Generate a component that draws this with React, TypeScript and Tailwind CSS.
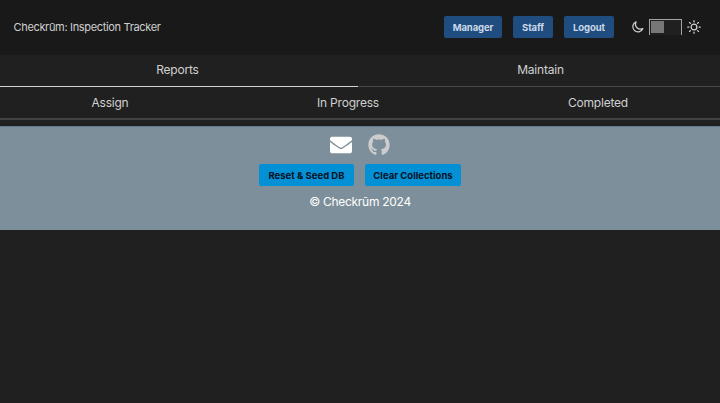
import type { ReactNode } from "react";
import { FaEnvelope, FaGithub } from "react-icons/fa";

function NavButton({ width, children }: { width: string; children: ReactNode }) {
  return (
    <button className={`${width} h-[22px] rounded-[2px] bg-[#1f4d80] pt-px text-[9.5px] leading-[20px] font-bold tracking-[-0.1px] whitespace-nowrap text-[#cbd8e8]`}>
      {children}
    </button>
  );
}

function SeedButton({ width, children }: { width: string; children: ReactNode }) {
  return (
    <button className={`${width} h-[22px] rounded-[2px] bg-[#0390d5] pt-px text-[9.5px] leading-[21px] font-bold whitespace-nowrap text-[#071225]`}>
      {children}
    </button>
  );
}

function MoonIcon() {
  return (
    <svg width="13" height="14" viewBox="0 0 13 14" fill="none" stroke="currentColor" strokeWidth="1.25" strokeLinejoin="round">
      <path d="M5 1.9A5.2 5.2 0 1 0 11.8 8.7C9.8 9.5 7.5 9.2 6 7.7 4.5 6.2 4.2 3.9 5 1.9Z" />
    </svg>
  );
}

function SunIcon() {
  return (
    <svg width="14" height="14" viewBox="0 0 14 14" fill="none" stroke="currentColor" strokeWidth="1.25" strokeLinecap="round">
      <circle cx="7" cy="7" r="2.9" />
      <path d="M7 .7v1.2M7 12.1v1.2M.7 7h1.2M12.1 7h1.2M2.55 2.55l.85.85M10.6 10.6l.85.85M2.55 11.45l.85-.85M10.6 3.4l.85-.85" />
    </svg>
  );
}

export default function App() {
  return (
    <div className="flex h-[403px] w-[720px] flex-col overflow-hidden bg-[#202020] font-['Inter',sans-serif] text-[#d0d0d0]">
      <header className="flex h-[55px] shrink-0 items-center justify-between bg-[#191919] pr-[19px] pb-px pl-[13.5px]">
        <h1 className="text-[11px] leading-4 tracking-[-0.33px]">Checkrūm: Inspection Tracker</h1>
        <div className="flex items-center">
          <nav className="mr-[17px] flex gap-[11px]">
            <NavButton width="w-[58px]">Manager</NavButton>
            <NavButton width="w-[40px]">Staff</NavButton>
            <NavButton width="w-[50px]">Logout</NavButton>
          </nav>
          <MoonIcon />
          <div className="mr-[5px] ml-[5px] h-4 w-[33px] border border-b-0 border-[#a3a3a3] bg-[#202020] p-px">
            <div className="h-3 w-[13px] bg-[#777777]" />
          </div>
          <SunIcon />
        </div>
      </header>

      <div className="flex h-8 shrink-0 text-center text-[12px] leading-[29px] tracking-[-0.2px]">
        <button className="w-[358px] border-b border-[#d0d0d0] pr-[3px] pb-0.5">Reports</button>
        <button className="flex-1 border-b border-[#484848] pb-0.5 pl-[3px]">Maintain</button>
      </div>
      <div className="flex h-[33px] shrink-0 border-b-2 border-[#424242] text-center text-[12px] leading-[31px] tracking-[-0.22px]">
        <button className="w-[220px]">Assign</button>
        <button className="w-[256px]">In Progress</button>
        <button className="flex-1">Completed</button>
      </div>

      <footer className="mt-1.5 flex h-[104px] shrink-0 flex-col items-center border-t border-[#65798a] bg-[#7d8f9a] pt-[7px]">
        <div className="flex gap-4">
          <FaEnvelope size={22} className="text-white" />
          <FaGithub size={22} className="text-[#cccccc]" />
        </div>
        <div className="mt-2 flex gap-[11px]">
          <SeedButton width="w-[95px]">Reset &amp; Seed DB</SeedButton>
          <SeedButton width="w-[96px]">Clear Collections</SeedButton>
        </div>
        <p className="mt-2 text-[12px] leading-4 tracking-[-0.28px] text-white">© Checkrūm 2024</p>
      </footer>
    </div>
  );
}
